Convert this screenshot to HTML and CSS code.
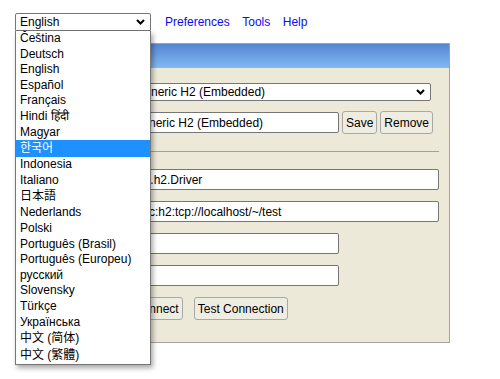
FILE: index.html
```html
<!DOCTYPE html>
<html>
<head>
    <meta charset="utf-8">
    <title>H2 Console</title>
    <link rel="stylesheet" href="styles.css">
</head>
<body>
    <form class="page">
        <div class="topbar">
            <div class="lang">
                <div class="select lang-select">
                    <span>English</span>
                    <svg class="chevron" width="9" height="6" viewBox="0 0 9 6"><path d="M1 1 L4.5 4.5 L8 1" fill="none" stroke="#000" stroke-width="2"/></svg>
                </div>
                <div class="lang-list">
                    <div class="opt">Čeština</div>
                    <div class="opt">Deutsch</div>
                    <div class="opt">English</div>
                    <div class="opt">Español</div>
                    <div class="opt">Français</div>
                    <div class="opt">Hindi हिंदी</div>
                    <div class="opt">Magyar</div>
                    <div class="opt cjk selected" lang="ko">한국어</div>
                    <div class="opt">Indonesia</div>
                    <div class="opt">Italiano</div>
                    <div class="opt cjk" lang="ja">日本語</div>
                    <div class="opt">Nederlands</div>
                    <div class="opt">Polski</div>
                    <div class="opt">Português (Brasil)</div>
                    <div class="opt">Português (Europeu)</div>
                    <div class="opt">русский</div>
                    <div class="opt">Slovensky</div>
                    <div class="opt">Türkçe</div>
                    <div class="opt">Українська</div>
                    <div class="opt cjk" lang="zh-CN">中文 (简体)</div>
                    <div class="opt cjk" lang="zh-TW">中文 (繁體)</div>
                </div>
            </div>
            <a href="#">Preferences</a>
            <a href="#">Tools</a>
            <a href="#">Help</a>
        </div>

        <div class="login">
            <div class="login-head">Login</div>
            <div class="login-body">
                <div class="row">
                    <label>Saved Settings:</label>
                    <div class="select saved">
                        <span>Generic H2 (Embedded)</span>
                        <svg class="chevron" width="9" height="6" viewBox="0 0 9 6"><path d="M1 1 L4.5 4.5 L8 1" fill="none" stroke="#000" stroke-width="2"/></svg>
                    </div>
                </div>
                <div class="row row-name">
                    <label>Setting Name:</label>
                    <input class="field short" type="text" value="Generic H2 (Embedded)">
                    <button type="button" class="save">Save</button>
                    <button type="button">Remove</button>
                </div>
                <hr>
                <div class="row row-first">
                    <label>Driver Class:</label>
                    <input class="field long" type="text" value="org.h2.Driver">
                </div>
                <div class="row">
                    <label>JDBC URL:</label>
                    <input class="field long" type="text" value="jdbc:h2:tcp://localhost/~/test">
                </div>
                <div class="row">
                    <label>User Name:</label>
                    <input class="field short" type="text" value="">
                </div>
                <div class="row">
                    <label>Password:</label>
                    <input class="field short" type="password" value="">
                </div>
                <div class="row buttons">
                    <label></label>
                    <button type="button">Connect</button>
                    <button type="button" class="test">Test Connection</button>
                </div>
            </div>
        </div>
    </form>
</body>
</html>
```

FILE: styles.css
```css
html, body {
    min-height: 100%;
}

body {
    margin: 0;
    min-height: 100vh;
    background-color: #fff;
    color: #000;
    font-family: "Liberation Sans", Arial, "Noto Sans CJK SC", sans-serif;
    font-size: 12px;
}

input, button {
    font-family: inherit;
    font-size: 12px;
    color: #000;
}

.page {
    width: 435px;
    padding: 13px 15px 40px;
}

.topbar {
    display: flex;
    align-items: center;
    gap: 12.5px;
    height: 18px;
}

.topbar a {
    color: #0b0bf5;
    text-decoration: none;
}

.lang {
    position: relative;
    margin-right: 1.5px;
}

.select {
    box-sizing: border-box;
    height: 18px;
    display: flex;
    align-items: center;
    justify-content: space-between;
    padding: 0 5px 0 4px;
    border: 1px solid #767676;
    border-radius: 2px;
    background-color: #fff;
    white-space: nowrap;
}

.lang-select {
    width: 136px;
    border-radius: 2px 2px 0 0;
}

.chevron {
    flex: none;
}

.lang-list {
    position: absolute;
    top: 18px;
    left: 0;
    z-index: 2;
    box-sizing: border-box;
    width: 136px;
    border: 1px solid #767676;
    border-top: 0;
    background-color: #fff;
    box-shadow: 2px 3px 5px rgba(0, 0, 0, 0.35);
}

.opt {
    height: 15.6px;
    line-height: 15.6px;
    padding: 0 4px;
    white-space: nowrap;
}

.opt.cjk {
    height: 17px;
    line-height: 17px;
}

.opt[lang="ko"] { font-family: "Liberation Sans", "Noto Sans CJK KR", sans-serif; }
.opt[lang="ja"] { font-family: "Liberation Sans", "Noto Sans CJK JP", sans-serif; }
.opt[lang="zh-CN"] { font-family: "Liberation Sans", "Noto Sans CJK SC", sans-serif; }
.opt[lang="zh-TW"] { font-family: "Liberation Sans", "Noto Sans CJK TC", sans-serif; }

.opt.selected {
    background-color: #1e90ff;
    color: #fff;
}

.login {
    margin-top: 12px;
    border: 1px solid #a3a3a0;
    background-color: #ece9d8;
}

.login-head {
    height: 24px;
    line-height: 24px;
    padding-left: 10px;
    background-image: linear-gradient(#5685d1, #80b9f4);
    color: #fff;
    font-weight: bold;
}

.login-body {
    padding: 15px 10px 22px 0;
}

.row {
    display: flex;
    align-items: center;
}

.row label {
    flex: none;
    box-sizing: border-box;
    width: 114px;
    padding-left: 10px;
}

.row + .row {
    margin-top: 11px;
}

.row.row-name {
    margin-top: 10px;
}

.row-first {
    margin-top: 17px;
}

.saved {
    width: 301px;
}

.field {
    box-sizing: border-box;
    height: 21px;
    margin: 0;
    padding: 0 2px;
    border: 1px solid #767676;
    border-radius: 2px;
    background-color: #fff;
}

.field.short {
    width: 209px;
}

.field.long {
    width: 309px;
}

hr {
    height: 0;
    margin: 17px 0 0 10px;
    border: 0;
    border-top: 1px solid #a0a0a0;
}

button {
    box-sizing: border-box;
    height: 23px;
    margin: 0;
    padding: 0 3px;
    border: 1px solid #a8a8a4;
    border-radius: 3px;
    background-color: #efece1;
    cursor: pointer;
}

.save {
    margin: 0 3px 0 3px;
}

.test {
    margin-left: 11px;
}
```
